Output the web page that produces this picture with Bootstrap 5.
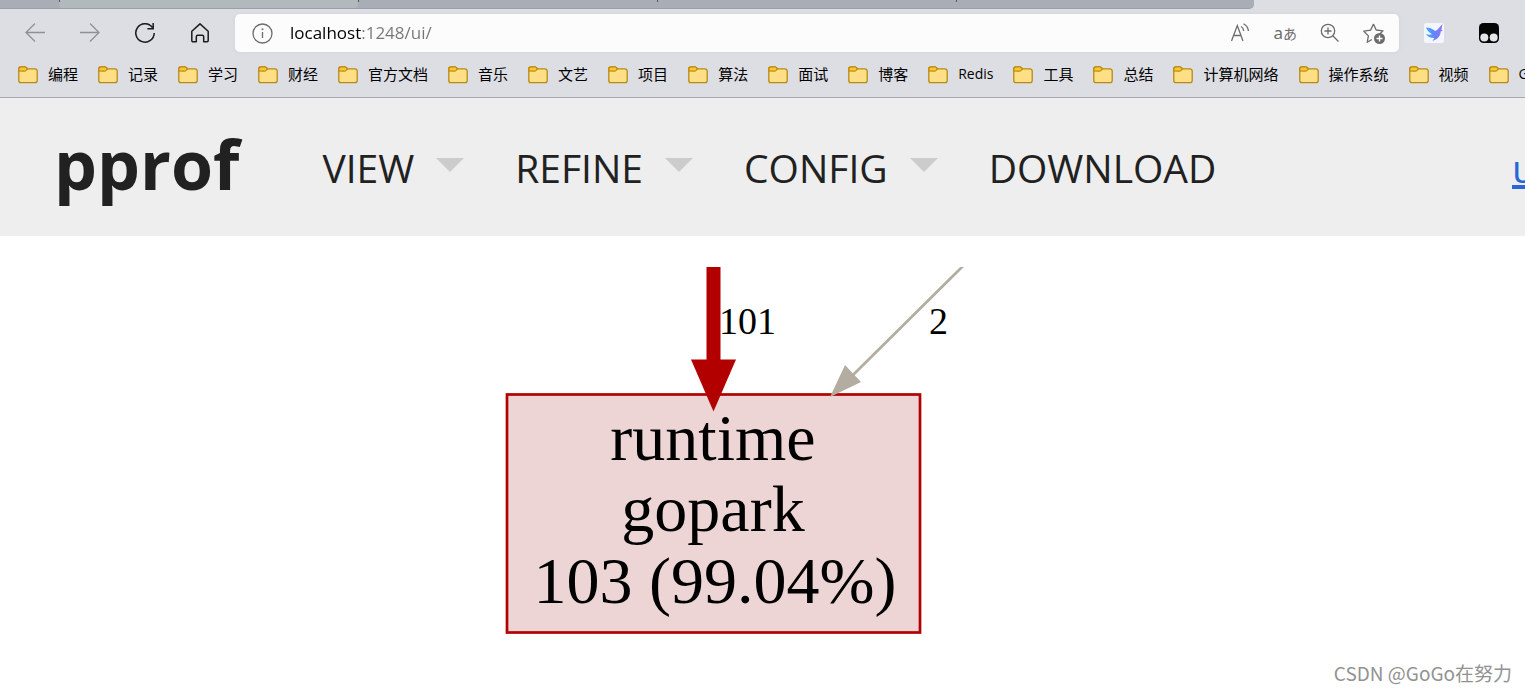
<!DOCTYPE html>
<html lang="zh-CN">
<head>
<meta charset="utf-8">
<meta name="viewport" content="width=device-width, initial-scale=1">
<title>pprof</title>
<link href="https://cdn.jsdelivr.net/npm/bootstrap@5.3.0/dist/css/bootstrap.min.css" rel="stylesheet">
<style>
  body { font-family: "Open Sans", "Noto Sans CJK SC", sans-serif; background: #fff; color: #000; overflow-x: hidden; }
  svg { flex: none; display: block; }
  .browser { background: #dddee3; border-bottom: 1px solid #a7a9b0; }
  .tabstrip { height: 9px; width: 1254px; max-width: 100%; background: #a8adb6; border-bottom: 1px solid #9b9fa7; border-radius: 0 0 5px 0; overflow: hidden; }
  .tab-item { width: 299px; flex: none; height: 9px; }
  .tab-item.first { width: 59px; }
  .tab-item + .tab-item::before { content: ""; display: block; width: 1px; height: 2px; background: #555; }
  .tab-item.current { background: #b2b9bd; border-radius: 0 0 5px 5px; }
  .toolbar { height: 47px; padding: 5px 26px 4px 25px; gap: 25px; }
  .tool { border: 0; padding: 0; background: none; color: #1b1b1b; line-height: 1; flex: none; }
  .tool:disabled { color: #8f9094; }
  .navset, .extensions { gap: 35px; }
  .address { height: 38px; border-radius: 5px; background: #fcfcfc; padding: 0 13px 0 17px; box-shadow: 0 0 4px #d2d3d8; color: #6c6c6c; }
  .address input { border: 0; outline: 0; padding: 0; margin-left: 17px; font: 17px/24px "Open Sans", sans-serif; min-width: 0;
    color: transparent; caret-color: #000; background: linear-gradient(90deg, #000 72px, #757575 72px); -webkit-background-clip: text; background-clip: text; }
  .address-tools { gap: 23px; }
  .translate { font: 17px/22px "Noto Sans", "Noto Sans CJK JP", sans-serif; }
  .translate span { font-size: 14px; }
  .bookmarks { height: 41px; padding: 0 18px 6px; gap: 20px; overflow: hidden; }
  .bookmarks a { gap: 10px; font: 15px/22px "Noto Sans CJK SC", sans-serif; color: #000; white-space: nowrap; flex: none; }
  .bookmarks svg { margin-top: 2px; }
  .bookmarks a.latin { font: 14px/22px "Open Sans", sans-serif; }
  .pprof-bar { height: 138px; background: #eee; color: #212121; padding-left: 54px; overflow: hidden; }
  .pprof-bar h1 { font-size: 68px; line-height: 80px; font-weight: 700; margin: 0 83px 6px 0; }
  .menu { gap: 51px; padding-top: 2px; }
  .menu button { font-size: 39px; line-height: 56px; color: #212121; gap: 22px; }
  .menu i { border: 14px solid transparent; border-top-color: #ccc; border-bottom: 0; margin-top: -7px; }
  .details { width: 13px; flex: none; overflow: hidden; font-size: 39px; line-height: 56px; color: #2a66d9; padding-top: 2px; text-decoration-thickness: 4px; }
  .graph { margin-top: 31px; }
  .graph svg { width: 100%; height: 380px; font-family: "Liberation Serif", serif; }
  .watermark { font: 19px/28px "Noto Sans CJK SC", sans-serif; color: #929292; padding-right: 13px; margin-top: 12px; }
</style>
</head>
<body>
<svg width="0" height="0" class="position-absolute" aria-hidden="true">
  <symbol id="folder" viewBox="0 0 20 18">
    <path d="M.8 3.500v11a2.200 2.200 0 0 0 2.200 2.200h14a2.200 2.200 0 0 0 2.200-2.200V5a2.200 2.200 0 0 0-2.200-2.200H9.500L7.800 1.200A2 2 0 0 0 6.500.8H3A2.200 2.200 0 0 0 .8 3z" fill="#ffdf86" stroke="#b78a16" stroke-width="1.300"/>
    <path d="M.8 5V3A2.200 2.200 0 0 1 3 .8h3.500c.5 0 1 .1 1.300.4l1.700 1.600L7.800 4.600c-.3.300-.8.500-1.300.5z" fill="#fcc62d" stroke="#b78a16" stroke-width="1.200"/>
  </symbol>
</svg>

<header class="browser">
  <div class="tabstrip d-flex">
    <div class="tab-item first"></div><div class="tab-item current"></div><div class="tab-item"></div><div class="tab-item"></div><div class="tab-item"></div>
  </div>
  <div class="toolbar d-flex align-items-center">
    <div class="navset d-flex align-items-center">
      <button class="tool" disabled aria-label="Back"><svg width="20" height="20" fill="none" stroke="currentColor" stroke-width="1.300"><path d="M20 9.500H1M10 .5l-9 9 9 9"/></svg></button>
      <button class="tool" disabled aria-label="Forward"><svg width="20" height="20" fill="none" stroke="currentColor" stroke-width="1.300"><path d="M0 9.500h19M10 .5l9 9-9 9"/></svg></button>
      <button class="tool" aria-label="Refresh"><svg width="20" height="20" fill="none" stroke="currentColor" stroke-width="1.500"><path d="M17.500 4.600A9.200 9.200 0 1 0 19.200 10M18.200 0v5.800h-5.800"/></svg></button>
      <button class="tool" aria-label="Home"><svg width="20" height="20" fill="none" stroke="currentColor" stroke-width="1.500" stroke-linejoin="round"><path d="M1.800 8.200 10 .9l8.200 7.300v9.300a1.200 1.200 0 0 1-1.200 1.200h-3.300v-5a1.500 1.500 0 0 0-1.500-1.500H7.800a1.500 1.500 0 0 0-1.500 1.500v5H3a1.200 1.200 0 0 1-1.200-1.200z"/></svg></button>
    </div>
    <div class="address d-flex align-items-center flex-grow-1">
      <svg width="21" height="21" fill="none" stroke="currentColor" stroke-width="1.300"><circle cx="10.500" cy="10.500" r="9.500"/><path d="M10.500 9v6"/><circle cx="10.500" cy="6.300" r=".4"/></svg>
      <input class="flex-grow-1" type="text" value="localhost:1248/ui/" aria-label="Address">
      <div class="address-tools d-flex align-items-center">
        <button class="tool text-reset" aria-label="Read aloud"><svg width="20" height="20" fill="none" stroke="currentColor" stroke-width="1.300"><path d="m1.500 18 5.800-15.500L13 18M3.500 12.500H11M11 3.500c1.800 1 2.600 2.700 2.700 4.500M13.500.8c2.800 1.600 4.600 4 4.900 7.200"/></svg></button>
        <button class="tool text-reset translate" aria-label="Translate">a<span>あ</span></button>
        <button class="tool text-reset" aria-label="Zoom"><svg width="20" height="20" fill="none" stroke="currentColor" stroke-width="1.300"><circle cx="8" cy="8" r="6.700"/><path d="m13 13 5.500 5.500M8 4.500v7M4.500 8h7"/></svg></button>
        <button class="tool text-reset" aria-label="Add to favourites"><svg width="23" height="21" fill="none" stroke="currentColor" stroke-width="1.300" stroke-linejoin="round"><path d="m10.500 1 2.700 6 6.800.8-3 3M9 16.500l-4.800 2.800 1.200-6.400L.8 8.200l6.800-1.100L10.500 1"/><circle cx="16.500" cy="15.500" r="5.500" fill="currentColor" stroke="none"/><path d="M16.500 12.500v6M13.500 15.500h6" stroke="#fff" stroke-width="1.400"/></svg></button>
      </div>
    </div>
    <div class="extensions d-flex align-items-center">
      <button class="tool" aria-label="Bird extension"><svg width="20" height="20"><defs><linearGradient id="bird"><stop stop-color="#38b0ff"/><stop offset=".6" stop-color="#6b80f8"/><stop offset="1" stop-color="#9a74f5"/></linearGradient></defs><rect width="20" height="20" rx="2" fill="#f3f6ff"/><path d="M2 4.500c4 .2 7 1.500 9.300 3.600L13 7l5.500-6-1 5.500 1.200 1.200-2 .8c-.2 5-3.500 8-8.300 9.500l2-3C6 15 3.500 13.500 2 11c2 .7 4 .9 6 .2C5 9.500 3 7.500 2 4.500z" fill="url(#bird)"/></svg></button>
      <button class="tool" aria-label="Script extension"><svg width="20" height="20"><rect width="20" height="20" rx="4.500" fill="#050505"/><circle cx="5.300" cy="14.500" r="4" fill="#e4e5e9"/><circle cx="14.700" cy="14.500" r="4" fill="#e4e5e9"/></svg></button>
    </div>
  </div>
  <nav class="bookmarks d-flex align-items-center" aria-label="Bookmarks">
    <a href="#" class="d-flex align-items-center text-decoration-none"><svg width="20" height="18"><use href="#folder"/></svg>编程</a>
    <a href="#" class="d-flex align-items-center text-decoration-none"><svg width="20" height="18"><use href="#folder"/></svg>记录</a>
    <a href="#" class="d-flex align-items-center text-decoration-none"><svg width="20" height="18"><use href="#folder"/></svg>学习</a>
    <a href="#" class="d-flex align-items-center text-decoration-none"><svg width="20" height="18"><use href="#folder"/></svg>财经</a>
    <a href="#" class="d-flex align-items-center text-decoration-none"><svg width="20" height="18"><use href="#folder"/></svg>官方文档</a>
    <a href="#" class="d-flex align-items-center text-decoration-none"><svg width="20" height="18"><use href="#folder"/></svg>音乐</a>
    <a href="#" class="d-flex align-items-center text-decoration-none"><svg width="20" height="18"><use href="#folder"/></svg>文艺</a>
    <a href="#" class="d-flex align-items-center text-decoration-none"><svg width="20" height="18"><use href="#folder"/></svg>项目</a>
    <a href="#" class="d-flex align-items-center text-decoration-none"><svg width="20" height="18"><use href="#folder"/></svg>算法</a>
    <a href="#" class="d-flex align-items-center text-decoration-none"><svg width="20" height="18"><use href="#folder"/></svg>面试</a>
    <a href="#" class="d-flex align-items-center text-decoration-none"><svg width="20" height="18"><use href="#folder"/></svg>博客</a>
    <a href="#" class="latin d-flex align-items-center text-decoration-none"><svg width="20" height="18"><use href="#folder"/></svg>Redis</a>
    <a href="#" class="d-flex align-items-center text-decoration-none"><svg width="20" height="18"><use href="#folder"/></svg>工具</a>
    <a href="#" class="d-flex align-items-center text-decoration-none"><svg width="20" height="18"><use href="#folder"/></svg>总结</a>
    <a href="#" class="d-flex align-items-center text-decoration-none"><svg width="20" height="18"><use href="#folder"/></svg>计算机网络</a>
    <a href="#" class="d-flex align-items-center text-decoration-none"><svg width="20" height="18"><use href="#folder"/></svg>操作系统</a>
    <a href="#" class="d-flex align-items-center text-decoration-none"><svg width="20" height="18"><use href="#folder"/></svg>视频</a>
    <a href="#" class="latin d-flex align-items-center text-decoration-none"><svg width="20" height="18"><use href="#folder"/></svg>G</a>
  </nav>
</header>

<div class="pprof-bar d-flex align-items-center">
  <h1>pprof</h1>
  <nav class="menu d-flex align-items-center" aria-label="pprof">
    <button class="tool d-flex align-items-center">VIEW<i></i></button>
    <button class="tool d-flex align-items-center">REFINE<i></i></button>
    <button class="tool d-flex align-items-center">CONFIG<i></i></button>
    <button class="tool">DOWNLOAD</button>
  </nav>
  <a href="#" class="details ms-auto">u</a>
</div>

<main class="graph">
  <svg role="img" aria-label="Call graph">
    <rect x="507" y="127.500" width="413" height="238" fill="#edd5d5" stroke="#b20000" stroke-width="2.700"/>
    <g stroke="#b20000" fill="#b20000"><path d="M713.500 0v94" stroke-width="14"/><path d="M691 92.500h45l-22.500 52z" stroke="none"/></g>
    <g fill="#b2ada0"><path d="M963-1 852 109" stroke="#b2ada0" stroke-width="2.700"/><path d="m845 98 16 17-31 15z"/></g>
    <g font-size="38"><text x="719" y="67">101</text><text x="929" y="67">2</text></g>
    <g font-size="66" text-anchor="middle"><text x="713" y="193">runtime</text><text x="713" y="264">gopark</text><text x="715" y="336">103 (99.04%)</text></g>
  </svg>
</main>
<footer class="watermark text-end">CSDN @GoGo在努力</footer>
<script src="https://cdn.jsdelivr.net/npm/bootstrap@5.3.0/dist/js/bootstrap.bundle.min.js"></script>
</body>
</html>
